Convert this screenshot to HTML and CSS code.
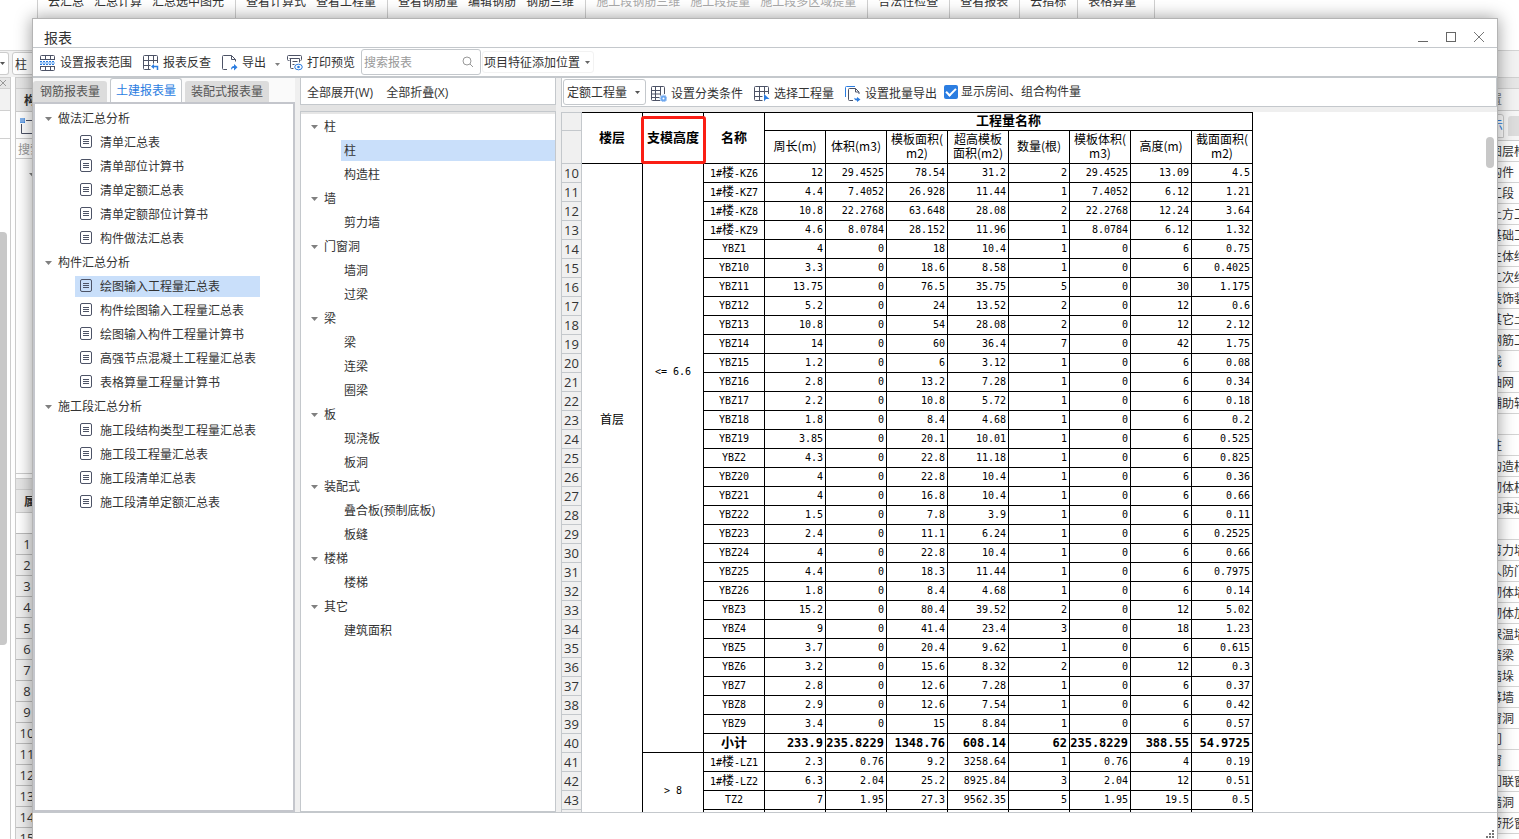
FILE: index.html
```html
<!DOCTYPE html>
<html lang="zh-CN">
<head>
<meta charset="utf-8">
<title>报表</title>
<link rel="stylesheet" href="styles.css">
</head>
<body>
<svg class="defs" aria-hidden="true">
  <symbol id="doc" viewBox="0 0 12 13"><rect x=".5" y=".5" width="11" height="12" rx="1.5" fill="none" stroke="#4d5366"/><path d="M3 4.5h6M3 6.5h6M3 8.5h6" stroke="#4d5366"/></symbol>
  <symbol id="caret" viewBox="0 0 7 4"><path d="M0 0h7L3.500 4z" fill="#808080"/></symbol>
</svg>

<div class="app">
  <nav class="ribbon">
    <div class="group"><span>云汇总</span><span>汇总计算</span><span>汇总选中图元</span></div>
    <div class="group"><span>查看计算式</span><span>查看工程量</span></div>
    <div class="group"><span>查看钢筋量</span><span>编辑钢筋</span><span>钢筋三维</span></div>
    <div class="group off"><span>施工段钢筋三维</span><span>施工段提量</span><span>施工段多区域提量</span></div>
    <div class="group"><span>合法性检查</span></div>
    <div class="group"><span>查看报表</span></div>
    <div class="group"><span>云指标</span></div>
    <div class="group"><span>表格算量</span></div>
    <div class="group"></div>
  </nav>
  <div class="context"><span class="combo combo-cut"><svg width="5" height="3"><path d="M0 0h5L2.500 3z" fill="#555"/></svg></span><span class="combo">柱</span></div>
  <div class="workspace">
    <div class="nav-strip">
      <div class="strip-head"><svg width="7" height="8"><path d="M0 1l6 6M6 1L0 7" stroke="#999"/></svg></div>
      <div class="strip-tab"></div>
      <div class="strip-row"></div>
      <div class="strip-body"><div class="strip-thumb"></div></div>
    </div>
    <div class="side">
      <div class="band"></div>
      <div class="side-head">构件</div>
      <div class="side-tools"><svg width="20" height="18"><path d="M1.500 6v9.500h14M6 2.500h8v4" fill="none" stroke="#4d5366"/><path d="M0 0h5v5H0z" fill="#3e87e0"/><path d="M1 0v5M3 0v5M0 1h5M0 3h5" stroke="#fff" stroke-opacity=".4"/></svg></div>
      <div class="side-search">搜索</div>
      <div class="side-list"><svg width="7" height="4"><use href="#caret"/></svg></div>
      <div class="band"></div>
      <div class="side-head">属性</div>
      <div class="side-blank"></div>
      <ol class="props"><li>1</li><li>2</li><li>3</li><li>4</li><li>5</li><li>6</li><li>7</li><li>8</li><li>9</li><li>10</li><li>11</li><li>12</li><li>13</li><li>14</li><li>15</li></ol>
    </div>
    <div class="canvas"></div>
    <div class="layers">
      <div class="band"></div>
      <div class="layers-head">置</div>
      <div class="layers-tabs"><span class="on">示</span><span class="other"></span></div>
      <ul><li>图层构件</li><li>构件</li><li>工段</li><li>土方工程</li><li>基础工程</li><li>主体结构</li><li>二次结构</li><li>装饰装修</li><li>其它土建</li><li>钢筋工程</li><li>线</li><li>轴网</li><li>辅助轴线</li><li></li><li>柱</li><li>构造柱</li><li>砌体柱</li><li>约束边缘</li><li></li><li>剪力墙</li><li>人防门</li><li>砌体墙</li><li>砌体加筋</li><li>保温墙</li><li>暗梁</li><li>墙垛</li><li>幕墙</li><li>窗洞</li><li>门</li><li>窗</li><li>门联窗</li><li>墙洞</li><li>带形窗</li></ul>
    </div>
  </div>
</div>

<main class="dialog" role="dialog" aria-labelledby="dialog-title">
  <header class="titlebar">
    <h1 id="dialog-title">报表</h1>
    <div class="window-buttons">
      <button aria-label="最小化"><svg width="12" height="12"><path d="M1 10.500h10" stroke="#666"/></svg></button>
      <button aria-label="最大化"><svg width="12" height="12"><rect x="1.500" y="1.500" width="9" height="9" fill="none" stroke="#666"/></svg></button>
      <button aria-label="关闭"><svg width="12" height="12"><path d="M1 1l10 10M11 1L1 11" stroke="#777"/></svg></button>
    </div>
  </header>

  <div class="toolbar">
    <button class="tool"><svg width="16" height="16" fill="none"><path d="M.5 5v-3.500q0-1 1-1h12q1 0 1 1V5M.5 4.500h14M5.500.5v4M10.500.5v4M.5 11v3.500q0 1 1 1h12q1 0 1-1V11M.5 11.500h14M5.500 11.500v4M10.500 11.500v4" stroke="#4d5366"/><path d="M0 7h15v2H0z" fill="#a9cdf5"/><path d="M0 6.500h15M0 9.500h15" stroke="#2b7de1" stroke-dasharray="2 1"/></svg>设置报表范围</button>
    <button class="tool"><svg width="16" height="16" fill="none"><path d="M14.500 8V1.500q0-1-1-1h-12q-1 0-1 1v12q0 1 1 1h6M5.500.5v14M10.500.5v8M.5 5.500h14M.5 10.500h7" stroke="#4d5366"/><path d="M8 11.500l3-2.500v5z" fill="#2b7de1"/><path d="M10 11.500h4.500V15" stroke="#2b7de1" stroke-width="1.500"/></svg>报表反查</button>
    <button class="tool"><svg width="16" height="16" fill="none"><path d="M5 14.500H1.500q-1 0-1-1v-12q0-1 1-1h8l4 4v2M9.500.5v4h4" stroke="#4d5366"/><path d="M9 15c0-3 1-4 3-4V9l3.500 3.200L12 15.500V13c-1.500 0-2 .5-3 2z" fill="#2b7de1"/></svg>导出<svg class="drop" width="5" height="3"><path d="M0 0h5L2.500 3z" fill="#808080"/></svg></button>
    <button class="tool"><svg width="16" height="16" fill="none"><path d="M2.500 5.500h-1q-1 0-1-1v-3q0-1 1-1h12q1 0 1 1v3q0 1-1 1M2.500 3.500h10v4M3.500 3.500v9q0 1 1 1h2M5.500 6.500h5M5.500 9.500h2" stroke="#4d5366"/><ellipse cx="11.500" cy="12" rx="3.800" ry="2.800" stroke="#2b7de1"/><circle cx="11.500" cy="12" r="1.300" fill="#2b7de1"/></svg>打印预览</button>
    <div class="search"><input type="search" placeholder="搜索报表" aria-label="搜索报表"><svg width="12" height="12" fill="none"><circle cx="5" cy="5" r="4" stroke="#999"/><path d="M8 8l3 3" stroke="#999"/></svg></div>
    <div class="pick pick-flat"><select aria-label="项目特征添加位置"><option>项目特征添加位置</option></select><svg width="5" height="3"><path d="M0 0h5L2.500 3z" fill="#666"/></svg></div>
  </div>

  <div class="body">
    <section class="reports">
      <div class="tabs" role="tablist">
        <button role="tab">钢筋报表量</button>
        <button role="tab" aria-selected="true">土建报表量</button>
        <button role="tab">装配式报表量</button>
      </div>
      <div class="panel tree">
        <details open><summary><svg width="7" height="4"><use href="#caret"/></svg>做法汇总分析</summary>
          <ul>
            <li><svg width="12" height="13"><use href="#doc"/></svg>清单汇总表</li>
            <li><svg width="12" height="13"><use href="#doc"/></svg>清单部位计算书</li>
            <li><svg width="12" height="13"><use href="#doc"/></svg>清单定额汇总表</li>
            <li><svg width="12" height="13"><use href="#doc"/></svg>清单定额部位计算书</li>
            <li><svg width="12" height="13"><use href="#doc"/></svg>构件做法汇总表</li>
          </ul></details>
        <details open><summary><svg width="7" height="4"><use href="#caret"/></svg>构件汇总分析</summary>
          <ul>
            <li class="selected"><svg width="12" height="13"><use href="#doc"/></svg>绘图输入工程量汇总表</li>
            <li><svg width="12" height="13"><use href="#doc"/></svg>构件绘图输入工程量汇总表</li>
            <li><svg width="12" height="13"><use href="#doc"/></svg>绘图输入构件工程量计算书</li>
            <li><svg width="12" height="13"><use href="#doc"/></svg>高强节点混凝土工程量汇总表</li>
            <li><svg width="12" height="13"><use href="#doc"/></svg>表格算量工程量计算书</li>
          </ul></details>
        <details open><summary><svg width="7" height="4"><use href="#caret"/></svg>施工段汇总分析</summary>
          <ul>
            <li><svg width="12" height="13"><use href="#doc"/></svg>施工段结构类型工程量汇总表</li>
            <li><svg width="12" height="13"><use href="#doc"/></svg>施工段工程量汇总表</li>
            <li><svg width="12" height="13"><use href="#doc"/></svg>施工段清单汇总表</li>
            <li><svg width="12" height="13"><use href="#doc"/></svg>施工段清单定额汇总表</li>
          </ul></details>
      </div>
    </section>

    <section class="elements">
      <div class="fold"><button>全部展开(W)</button><button>全部折叠(X)</button></div>
      <div class="panel tree">
        <details open><summary><svg width="7" height="4"><use href="#caret"/></svg>柱</summary><ul><li class="selected">柱</li><li>构造柱</li></ul></details>
        <details open><summary><svg width="7" height="4"><use href="#caret"/></svg>墙</summary><ul><li>剪力墙</li></ul></details>
        <details open><summary><svg width="7" height="4"><use href="#caret"/></svg>门窗洞</summary><ul><li>墙洞</li><li>过梁</li></ul></details>
        <details open><summary><svg width="7" height="4"><use href="#caret"/></svg>梁</summary><ul><li>梁</li><li>连梁</li><li>圈梁</li></ul></details>
        <details open><summary><svg width="7" height="4"><use href="#caret"/></svg>板</summary><ul><li>现浇板</li><li>板洞</li></ul></details>
        <details open><summary><svg width="7" height="4"><use href="#caret"/></svg>装配式</summary><ul><li>叠合板(预制底板)</li><li>板缝</li></ul></details>
        <details open><summary><svg width="7" height="4"><use href="#caret"/></svg>楼梯</summary><ul><li>楼梯</li></ul></details>
        <details open><summary><svg width="7" height="4"><use href="#caret"/></svg>其它</summary><ul><li>建筑面积</li></ul></details>
      </div>
    </section>

    <section class="sheet">
      <div class="sheet-tools">
        <div class="pick"><select aria-label="工程量类型"><option>定额工程量</option></select><svg width="5" height="3"><path d="M0 0h5L2.500 3z" fill="#555"/></svg></div>
        <button class="tool"><svg width="16" height="16" fill="none"><path d="M9 14.500H1.500q-1 0-1-1v-12q0-1 1-1h11q1 0 1 1V8M4.500.5v14M9.500.5v9M.5 4.500h9M.5 8h9M.5 11.500h8" stroke="#4d5366"/><circle cx="12.500" cy="12.500" r="2" stroke="#6ca6ee" stroke-width="2"/><circle cx="12.500" cy="12.500" r="3.500" stroke="#6ca6ee" stroke-dasharray="1 1"/></svg>设置分类条件</button>
        <button class="tool"><svg width="16" height="16" fill="none"><path d="M14.500 8V1.500q0-1-1-1h-12q-1 0-1 1v12q0 1 1 1h7M5.500.5v14M10.500.5v8M.5 5.500h14M.5 10.500h8" stroke="#4d5366"/><path d="M10 8l5.500 5H12l-2 2.500z" fill="#2b7de1"/></svg>选择工程量</button>
        <button class="tool"><svg width="16" height="16" fill="none"><path d="M.5 11V1.500q0-1 1-1H10" stroke="#2b7de1"/><path d="M8 14.500H4.500q-1 0-1-1v-10q0-1 1-1h6l3.500 3.500V8M10.500 2.500V6H14" stroke="#4d5366"/><path d="M9 8v3q0 1.500 3 1.500V11l3.500 2.500L12 16v-1.500C9 14.500 9 12 9 8z" fill="#2b7de1"/></svg>设置批量导出</button>
        <label class="check"><input type="checkbox" checked>显示房间、组合构件量</label>
      </div>
      <div class="sheet-view">
        <div class="grid-wrap">
<table class="grid">
<colgroup><col class="c-index"><col span="11"></colgroup>
<thead>
<tr class="h1"><td class="ix"><th rowspan="2">楼层<th rowspan="2" class="marked">支模高度<th rowspan="2">名称<th colspan="8">工程量名称
<tr class="h2"><td class="ix"><th>周长(m)<th>体积(m3)<th>模板面积(<br>m2)<th>超高模板<br>面积(m2)<th>数量(根)<th>模板体积(<br>m3)<th>高度(m)<th>截面面积(<br>m2)
</thead>
<tbody>
<tr><td class="ix">10<td class="floor" rowspan="35">首层<td class="height" rowspan="31">&lt;= 6.6<td>1#<span>楼</span>-KZ6<td>12<td>29.4525<td>78.54<td>31.2<td>2<td>29.4525<td>13.09<td>4.5
<tr><td class="ix">11<td>1#<span>楼</span>-KZ7<td>4.4<td>7.4052<td>26.928<td>11.44<td>1<td>7.4052<td>6.12<td>1.21
<tr><td class="ix">12<td>1#<span>楼</span>-KZ8<td>10.8<td>22.2768<td>63.648<td>28.08<td>2<td>22.2768<td>12.24<td>3.64
<tr><td class="ix">13<td>1#<span>楼</span>-KZ9<td>4.6<td>8.0784<td>28.152<td>11.96<td>1<td>8.0784<td>6.12<td>1.32
<tr><td class="ix">14<td>YBZ1<td>4<td>0<td>18<td>10.4<td>1<td>0<td>6<td>0.75
<tr><td class="ix">15<td>YBZ10<td>3.3<td>0<td>18.6<td>8.58<td>1<td>0<td>6<td>0.4025
<tr><td class="ix">16<td>YBZ11<td>13.75<td>0<td>76.5<td>35.75<td>5<td>0<td>30<td>1.175
<tr><td class="ix">17<td>YBZ12<td>5.2<td>0<td>24<td>13.52<td>2<td>0<td>12<td>0.6
<tr><td class="ix">18<td>YBZ13<td>10.8<td>0<td>54<td>28.08<td>2<td>0<td>12<td>2.12
<tr><td class="ix">19<td>YBZ14<td>14<td>0<td>60<td>36.4<td>7<td>0<td>42<td>1.75
<tr><td class="ix">20<td>YBZ15<td>1.2<td>0<td>6<td>3.12<td>1<td>0<td>6<td>0.08
<tr><td class="ix">21<td>YBZ16<td>2.8<td>0<td>13.2<td>7.28<td>1<td>0<td>6<td>0.34
<tr><td class="ix">22<td>YBZ17<td>2.2<td>0<td>10.8<td>5.72<td>1<td>0<td>6<td>0.18
<tr><td class="ix">23<td>YBZ18<td>1.8<td>0<td>8.4<td>4.68<td>1<td>0<td>6<td>0.2
<tr><td class="ix">24<td>YBZ19<td>3.85<td>0<td>20.1<td>10.01<td>1<td>0<td>6<td>0.525
<tr><td class="ix">25<td>YBZ2<td>4.3<td>0<td>22.8<td>11.18<td>1<td>0<td>6<td>0.825
<tr><td class="ix">26<td>YBZ20<td>4<td>0<td>22.8<td>10.4<td>1<td>0<td>6<td>0.36
<tr><td class="ix">27<td>YBZ21<td>4<td>0<td>16.8<td>10.4<td>1<td>0<td>6<td>0.66
<tr><td class="ix">28<td>YBZ22<td>1.5<td>0<td>7.8<td>3.9<td>1<td>0<td>6<td>0.11
<tr><td class="ix">29<td>YBZ23<td>2.4<td>0<td>11.1<td>6.24<td>1<td>0<td>6<td>0.2525
<tr><td class="ix">30<td>YBZ24<td>4<td>0<td>22.8<td>10.4<td>1<td>0<td>6<td>0.66
<tr><td class="ix">31<td>YBZ25<td>4.4<td>0<td>18.3<td>11.44<td>1<td>0<td>6<td>0.7975
<tr><td class="ix">32<td>YBZ26<td>1.8<td>0<td>8.4<td>4.68<td>1<td>0<td>6<td>0.14
<tr><td class="ix">33<td>YBZ3<td>15.2<td>0<td>80.4<td>39.52<td>2<td>0<td>12<td>5.02
<tr><td class="ix">34<td>YBZ4<td>9<td>0<td>41.4<td>23.4<td>3<td>0<td>18<td>1.23
<tr><td class="ix">35<td>YBZ5<td>3.7<td>0<td>20.4<td>9.62<td>1<td>0<td>6<td>0.615
<tr><td class="ix">36<td>YBZ6<td>3.2<td>0<td>15.6<td>8.32<td>2<td>0<td>12<td>0.3
<tr><td class="ix">37<td>YBZ7<td>2.8<td>0<td>12.6<td>7.28<td>1<td>0<td>6<td>0.37
<tr><td class="ix">38<td>YBZ8<td>2.9<td>0<td>12.6<td>7.54<td>1<td>0<td>6<td>0.42
<tr><td class="ix">39<td>YBZ9<td>3.4<td>0<td>15<td>8.84<td>1<td>0<td>6<td>0.57
<tr class="sum"><td class="ix">40<td><span>小计</span><td>233.9<td>235.8229<td>1348.76<td>608.14<td>62<td>235.8229<td>388.55<td>54.9725
<tr><td class="ix">41<td class="mid" rowspan="4">&gt; 8<td>1#<span>楼</span>-LZ1<td>2.3<td>0.76<td>9.2<td>3258.64<td>1<td>0.76<td>4<td>0.19
<tr><td class="ix">42<td>1#<span>楼</span>-LZ2<td>6.3<td>2.04<td>25.2<td>8925.84<td>3<td>2.04<td>12<td>0.51
<tr><td class="ix">43<td>TZ2<td>7<td>1.95<td>27.3<td>9562.35<td>5<td>1.95<td>19.5<td>0.5
<tr><td class="ix"><td><td><td><td><td><td><td><td><td>
</tbody>
</table>
        </div>
        <div class="rail"><div class="thumb"></div></div>
      </div>
    </section>
  </div>
  <footer class="status"><svg width="9" height="9" fill="#777"><path d="M6 0h2v2H6zM3 3h2v2H3zM6 3h2v2H6zM0 6h2v2H0zM3 6h2v2H3zM6 6h2v2H6z"/></svg></footer>
</main>
</body>
</html>
```

FILE: styles.css
```css
* { box-sizing: border-box; }
html, body { height: 100%; }
body {
  margin: 0;
  overflow: hidden;
  position: relative;
  background: #fff;
  color: #333;
  font: 12px/16px "Open Sans", "Noto Sans CJK SC", sans-serif;
}
ul, ol { margin: 0; padding: 0; list-style: none; }
svg { flex: none; display: block; }
button, input, select { font: inherit; color: inherit; margin: 0; }
button { background: none; border: 0; padding: 0; white-space: nowrap; }
.defs { position: absolute; width: 0; height: 0; }

/* main application, behind the dialog */
.app { height: 100%; display: flex; flex-direction: column; overflow: hidden; white-space: nowrap; }
.ribbon { flex: none; display: flex; height: 56px; margin-top: -6px; padding-left: 37px; }
.group { display: flex; gap: 10px; padding: 0 11px 0 10px; border-left: 1px solid #d0d0d0; }
.group:nth-child(8) { padding-right: 18px; }
.off { color: #aaa; }
.context { flex: none; height: 27px; display: flex; gap: 3px; background: #f2f2f2; border-top: 1px solid #d4d4d4; padding-top: 1px; }
.combo { width: 120px; height: 23px; line-height: 23px; padding-left: 2px; background: #fff; border: 1px solid #ccc; border-radius: 3px; }
.combo-cut { width: 9px; border-left: 0; border-radius: 0 3px 3px 0; padding: 9px 0 0 0; overflow: hidden; }
.workspace { flex: 1; min-height: 0; display: flex; }
.band { height: 12px; background: #e6e6e6; border: 1px solid #d0d0d0; border-width: 1px 0; }

.nav-strip { width: 11px; border-right: 1px solid #ccc; display: flex; flex-direction: column; }
.strip-head { height: 12px; background: #e6e6e6; border: 1px solid #d0d0d0; border-width: 1px 0; padding-top: 1px; }
.strip-tab { height: 22px; background: #f2f2f2; border-bottom: 1px solid #d0d0d0; }
.strip-row { height: 28px; border-bottom: 1px solid #d0d0d0; }
.strip-body { flex: 1; padding-top: 93px; }
.strip-thumb { width: 7px; height: 413px; background: #c8c8c8; border-radius: 0 4px 4px 0; }

.side { width: 120px; margin-left: 4px; border-left: 1px solid #ccc; }
.side-head { height: 23px; line-height: 24px; padding-left: 8px; font-weight: bold; background: #eaeaea; border-bottom: 1px solid #ccc; }
.side-tools { height: 27px; padding: 6px 0 0 4px; border-bottom: 1px solid #ccc; }
.side-search { height: 20px; line-height: 22px; padding-left: 2px; color: #999; border-bottom: 1px solid #ccc; }
.side-list { height: 315px; padding: 14px 0 0 13px; border-bottom: 1px solid #ccc; }
.side-list + .band { margin-top: 4px; }
.side-blank { height: 20px; }
.props { font-size: 13px; line-height: 20px; }
.props li { width: 22px; height: 21px; text-align: center; background: #f0f0f0; border-top: 1px solid #bbb; }
.canvas { flex: 1; }

.layers { width: 40px; background: #fff; }
.layers-head { height: 22px; line-height: 22px; padding-left: 11px; color: #777; background: #f2f2f2; border-bottom: 1px solid #ccc; }
.layers-tabs { height: 30px; display: flex; gap: 4px; align-items: center; background: #f6f6f6; border-bottom: 1px solid #ccc; }
.layers-tabs .on { width: 31px; height: 24px; line-height: 22px; padding-left: 11px; color: #2b7de1; background: #fff; border: 1px solid #ccc; border-radius: 3px 3px 0 0; }
.layers-tabs .other { width: 20px; height: 20px; background: #ddd; border-radius: 3px 0 0 0; }
.layers li { height: 21px; line-height: 22px; padding-left: 11px; border-bottom: 1px solid #d4d4d4; overflow: hidden; }

/* dialog window */
.dialog {
  position: absolute;
  top: 18px; right: 21px; bottom: 0; left: 32px;
  display: flex;
  flex-direction: column;
  background: #fff;
  border: 1px solid #b4b4b4;
  border-bottom: 0;
  box-shadow: 0 0 16px rgba(0, 0, 0, .4);
}
.titlebar { flex: none; height: 29px; display: flex; align-items: center; justify-content: space-between; padding: 8px 12px 0 11px; border-bottom: 1px solid #c4c8cc; }
.titlebar h1 { margin: 2px 0 0; font-size: 14px; font-weight: normal; line-height: 20px; }
.window-buttons { display: flex; gap: 16px; }

.toolbar { flex: none; height: 30px; display: flex; align-items: center; padding-left: 7px; border-bottom: 2px solid #c4c8cc; }
.tool { display: flex; align-items: center; gap: 4px; margin-right: 11px; padding-top: 2px; line-height: 20px; }
.drop { margin: 2px 0 0 5px; }
.toolbar .tool:nth-child(3) { margin-right: 7px; }
.toolbar .tool:nth-child(4) { margin-right: 6px; }
.search { width: 120px; height: 26px; display: flex; align-items: center; padding-right: 6px; border: 1px solid #c4c8cc; border-radius: 3px; }
.search input { flex: 1; min-width: 0; height: 24px; padding: 1px 2px 0; border: 0; background: none; outline: 0; appearance: none; }
.search input::placeholder { color: #999; opacity: 1; }
.pick { width: 83px; height: 26px; display: flex; align-items: center; position: relative; border: 1px solid #c4c8cc; border-radius: 3px; }
.pick select { width: 100%; height: 24px; padding: 2px 0 0 3px; border: 0; background: none; appearance: none; outline: 0; }
.pick svg { position: absolute; right: 5px; }
.pick-flat { width: 112px; border-color: #f2f2f2; margin-left: 1px; height: 22px; }
.pick-flat select { padding-left: 1px; height: 20px; }
.pick-flat svg { right: 3px; }

.body { flex: 1; min-height: 0; display: flex; gap: 5px; background: #efefef; }
.panel { flex: 1; min-height: 0; overflow: hidden; background: #fff; border: 1px solid #c4c8cc; }

.reports { width: 262px; display: flex; flex-direction: column; }
.tabs { height: 24px; display: flex; align-items: flex-end; gap: 3px; background: #fafafa; }
.tabs button { height: 21px; padding: 0 6px; line-height: 20px; color: #555; background: #dcdcdc; border-radius: 3px 3px 0 0; }
.tabs button[aria-selected] { height: 24px; padding: 0 5px; line-height: 22px; color: #2b7de1; background: #fff; border: 1px solid #c4c8cc; border-bottom: 0; }
.tabs button:first-child { padding: 0 7px; }
.reports .panel { border: 2px solid #c4c6cc; padding-top: 3px; }

.tree summary { display: flex; align-items: center; height: 24px; list-style: none; padding-left: 10px; }
.tree summary svg { margin-right: 6px; }
.tree ul { display: flex; flex-direction: column; }
.tree li { display: flex; align-items: center; height: 21px; margin: 1px 0 2px 40px; padding-left: 3px; white-space: nowrap; }
.tree li.selected { background: #c9dffa; }
.reports li { width: 185px; padding-left: 5px; gap: 8px; }
.reports .tree li { padding-left: 5px; }
.reports li svg { margin-bottom: 2px; }

.elements { width: 256px; display: flex; flex-direction: column; gap: 6px; background: #e3e3e3; }
.fold { height: 27px; display: flex; align-items: center; gap: 13px; padding: 3px 0 0 6px; background: #fff; border: 1px solid #c4c8cc; border-top: 0; }
.elements .panel { padding-top: 3px; box-shadow: inset 0 2px #e6e6e6; }

.sheet { flex: 1; min-width: 0; display: flex; flex-direction: column; gap: 5px; }
.sheet-tools { flex: none; height: 29px; display: flex; align-items: center; padding-left: 1px; background: #fff; border: 1px solid #c4c8cc; border-top: 0; }
.sheet-tools .pick { margin-right: 5px; }
.sheet-tools .tool { padding-top: 3px; }
.sheet-tools .tool:nth-of-type(3) { margin-right: 7px; }
.check { display: flex; align-items: center; gap: 3px; padding-bottom: 1px; }
.check input { appearance: none; width: 14px; height: 14px; border-radius: 2px; background: #2b7de1; display: grid; place-items: center; }
.check input::before { content: ""; width: 8px; height: 4px; margin-bottom: 2px; border: solid #fff; border-width: 0 0 2px 2px; transform: rotate(-45deg); }
.sheet-view { flex: 1; min-height: 0; display: flex; justify-content: space-between; overflow: hidden; background: #fff; }
.grid-wrap { overflow: hidden; }
.rail { width: 11px; padding-top: 25px; }
.thumb { width: 8px; height: 31px; border-radius: 4px; background: #c8c8c8; }

/* report grid */
.grid { table-layout: fixed; width: 692px; border-collapse: separate; border-spacing: 0; color: #000; }
.grid col { width: 61px; }
.grid .c-index { width: 21px; }
.grid th, .grid td { padding: 0; height: 19px; border: solid #000; border-width: 0 1px 1px 0; white-space: nowrap; }
.grid td { padding-right: 2px; font: 10px/16px "DejaVu Sans Mono", "Noto Sans CJK SC", monospace; text-align: right; }
.grid td:has(span), .grid .ix + td, .grid td.height, .grid td.mid, .grid .height + td, .grid .mid + td { padding-right: 0; text-align: center; }
.grid td span { font-size: 12px; }
.grid th { padding-bottom: 3px; font: bold 13px/14px "Noto Sans CJK SC", sans-serif; }
.grid .h1 th { border-top-width: 1px; }
.grid .h2 th { height: 33px; padding-bottom: 2px; font: 12px/14px "Noto Sans CJK SC", sans-serif; }
.grid .ix { padding: 0; font: 13px/16px "Open Sans", sans-serif; text-align: center; color: #333; background: #f0f0f0; border-color: #c4c8cc; border-left-width: 1px; }
.grid .h1 .ix { border-top-width: 1px; }
.grid td.floor { padding: 248px 0 0; vertical-align: top; font-size: 12px; text-align: center; }
.grid td.height { padding-top: 200px; vertical-align: top; }
.grid .sum td { font-size: 12px; font-weight: bold; }
.grid .sum td span { font-size: 13px; }
.grid .sum .ix { font-size: 13px; font-weight: normal; }
.marked { position: relative; }
.marked::after { content: ""; position: absolute; top: 3px; right: -3px; bottom: -1px; left: -2px; border: 3px solid #fa1e14; border-radius: 3px; }

.status { flex: none; height: 27px; display: flex; align-items: flex-end; justify-content: flex-end; padding-right: 2px; border-top: 1px solid #c4c8cc; }
```
